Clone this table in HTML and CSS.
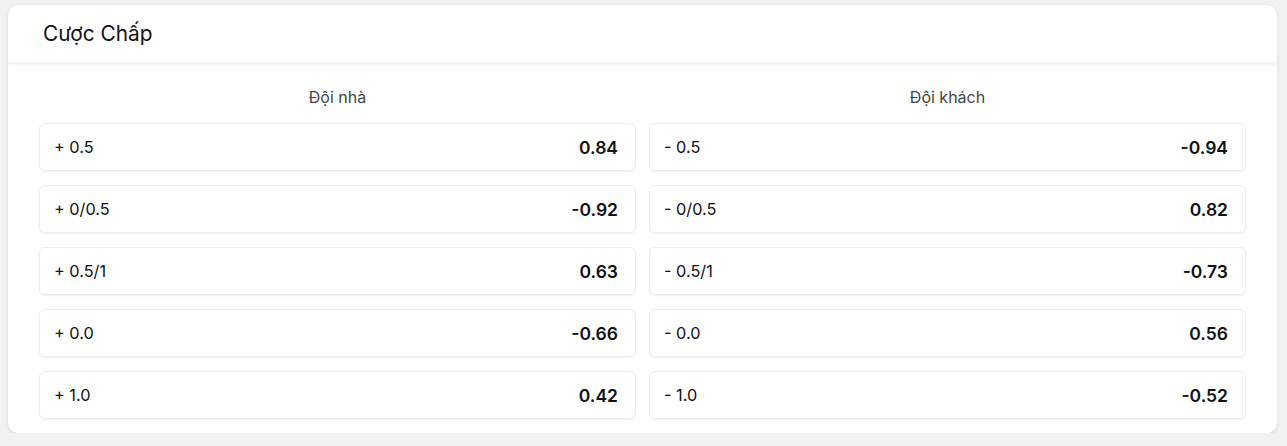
FILE: index.html
```html
<!DOCTYPE html>
<html lang="vi">
<head>
<meta charset="utf-8">
<link rel="stylesheet" href="styles.css">
</head>
<body>
<div class="card">
  <div class="card-header">Cược Chấp</div>
  <div class="card-body">
    <div class="col">
      <div class="col-title">Đội nhà</div>
      <div class="row"><span class="label">+ 0.5</span><span class="val">0.84</span></div>
      <div class="row"><span class="label">+ 0/0.5</span><span class="val">-0.92</span></div>
      <div class="row"><span class="label">+ 0.5/1</span><span class="val">0.63</span></div>
      <div class="row"><span class="label">+ 0.0</span><span class="val">-0.66</span></div>
      <div class="row"><span class="label">+ 1.0</span><span class="val">0.42</span></div>
    </div>
    <div class="col">
      <div class="col-title">Đội khách</div>
      <div class="row"><span class="label">- 0.5</span><span class="val">-0.94</span></div>
      <div class="row"><span class="label">- 0/0.5</span><span class="val">0.82</span></div>
      <div class="row"><span class="label">- 0.5/1</span><span class="val">-0.73</span></div>
      <div class="row"><span class="label">- 0.0</span><span class="val">0.56</span></div>
      <div class="row"><span class="label">- 1.0</span><span class="val">-0.52</span></div>
    </div>
  </div>
</div>
</body>
</html>
```
FILE: styles.css
```css
html, body {
  margin: 0;
  padding: 0;
  background: #f2f2f2;
}
body {
  padding: 5px 10px 0 8px;
  font-family: Inter, "Noto Sans", sans-serif;
  color: #111;
}
.card {
  background: #fff;
  border-radius: 10px;
  box-shadow: 0 1px 4px rgba(0,0,0,0.12);
  overflow: hidden;
}
.card-header {
  height: 57px;
  box-sizing: border-box;
  padding: 0 35px;
  display: flex;
  align-items: center;
  font-size: 20.8px;
  font-weight: 400;
  color: #111;
  box-shadow: 0 2px 4px rgba(0,0,0,0.08);
  position: relative;
}
.card-body {
  display: grid;
  grid-template-columns: 1fr 1fr;
  column-gap: 13px;
  padding: 24px 31px 14px 31px;
}
.col {
  display: flex;
  flex-direction: column;
  gap: 14px;
}
.col-title {
  text-align: center;
  font-size: 16px;
  color: #444;
  line-height: 22px;
  margin-bottom: 1px;
}
.row {
  height: 48px;
  box-sizing: border-box;
  border: 1px solid #ececec;
  border-radius: 6px;
  box-shadow: 0 1px 2px rgba(0,0,0,0.06);
  display: flex;
  align-items: center;
  justify-content: space-between;
  padding: 0 17px 0 14px;
}
.label {
  font-size: 16.3px;
  color: #111;
}
.val {
  font-size: 17.5px;
  font-weight: 600;
  color: #111;
}
```
